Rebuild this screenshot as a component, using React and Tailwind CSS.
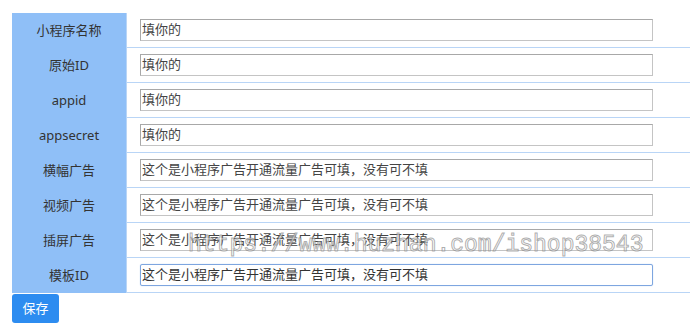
const ROWS = [
  { label: "小程序名称", value: "填你的" },
  { label: "原始ID", value: "填你的" },
  { label: "appid", value: "填你的" },
  { label: "appsecret", value: "填你的" },
  { label: "横幅广告", value: "这个是小程序广告开通流量广告可填，没有可不填" },
  { label: "视频广告", value: "这个是小程序广告开通流量广告可填，没有可不填" },
  { label: "插屏广告", value: "这个是小程序广告开通流量广告可填，没有可不填" },
  { label: "模板ID", value: "这个是小程序广告开通流量广告可填，没有可不填", focus: true },
];

export default function App() {
  return (
    <div
      className="relative w-[700px] h-[336px] bg-white pl-3 pt-[13px] text-[13px] text-[#333]"
      style={{ fontFamily: '"Noto Sans", "Noto Sans CJK SC", sans-serif' }}
    >
      <div className="w-[678px] flex flex-col">
        {ROWS.map((r) => (
          <div key={r.label} className="flex h-[35px]">
            <div className="w-[114px] shrink-0 bg-[#8fbff7] flex items-center justify-center">
              {r.label}
            </div>
            <div className="flex-1 flex items-center pl-[13px] border-b border-l border-[#b9d5f6]">
              <div
                className={
                  r.focus
                    ? "w-[513px] h-[22px] flex items-center pl-[1px] border border-[#7ea6e0] rounded-[2px] shadow-[0_0_1px_#9cbcec] text-[#333]"
                    : "w-[513px] h-[22px] flex items-center pl-[1px] border border-[#c4c4c4] border-t-[#a8a8a8] border-l-[#a8a8a8] text-[#444]"
                }
              >
                {r.value}
              </div>
            </div>
          </div>
        ))}
      </div>
      <button className="mt-[1px] w-[47px] h-[29px] rounded-[3px] bg-[#2d8cf0] text-white text-[13px] flex items-center justify-center">
        保存
      </button>
      <div
        className="absolute left-[188px] top-[234px] text-[23px] leading-none text-white/60 pointer-events-none whitespace-nowrap"
        style={{
          fontFamily: '"Liberation Mono", monospace',
          WebkitTextStroke: "1px rgba(120,120,120,0.6)",
        }}
      >
        https://www.huzhan.com/ishop38543
      </div>
    </div>
  );
}
